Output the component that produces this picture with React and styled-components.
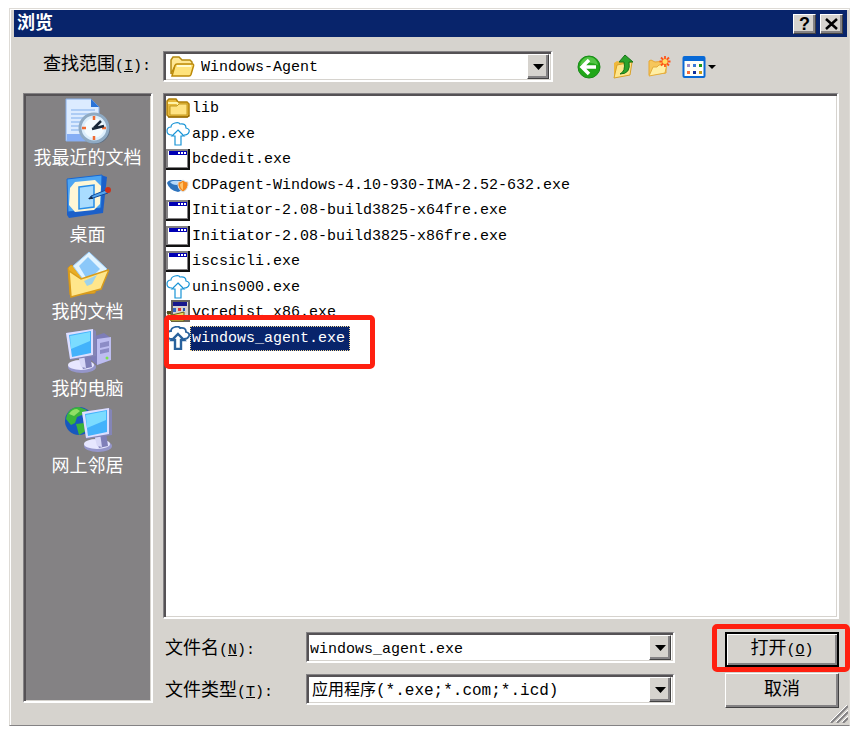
import React, { useState } from 'react';
import styled, { createGlobalStyle, css } from 'styled-components';

const GlobalStyle = createGlobalStyle`
  * {
    box-sizing: border-box;
  }
  body {
    margin: 0;
    background: #fff;
    color: #000;
    font-family: "Liberation Mono", "Noto Sans CJK SC", monospace;
    font-size: 15px;
    line-height: 20px;
  }
  button, input, select {
    font: inherit;
    color: inherit;
    margin: 0;
    padding: 0;
    border: 0;
    border-radius: 0;
    background: none;
  }
  svg {
    display: block;
    flex: none;
  }
`;

const sunken = css`
  border: solid;
  border-width: 1px 2px 2px 1px;
  border-color: #848284 #fff #fff #848284;
  box-shadow: inset 2px 2px #555255, inset -1px -1px #d6d3ce;
`;

const raised = css`
  background: #d6d3ce;
  border: 1px solid;
  border-color: #fff #424142 #424142 #fff;
  box-shadow: inset -2px -2px #848284;
`;

const Page = styled.div`
  min-height: 100vh;
  padding: 8px 4px 10px 9px;
  display: flex;
`;

const Dialog = styled.main`
  position: relative;
  flex: 1;
  min-width: 0;
  display: flex;
  flex-direction: column;
  padding-top: 1px;
  background: #d6d3ce;
  border: 1px solid #dedbd6;
  border-bottom-color: #848284;
  box-shadow: inset 1px 1px #fff;
`;

const TitleBar = styled.header`
  height: 27px;
  margin: 0 2px 0 4px;
  padding: 0 4px 0 3px;
  display: flex;
  align-items: center;
  gap: 4px;
  background: #08246b;
  color: #fff;
  h1 {
    flex: 1;
    margin: 0;
    font-size: 18px;
    line-height: 20px;
    font-weight: bold;
  }
`;

const CaptionButton = styled.button`
  ${raised}
  width: 23px;
  height: 20px;
  display: flex;
  align-items: center;
  justify-content: center;
  color: #000;
  font-family: "Liberation Sans", sans-serif;
  font-size: 18px;
  font-weight: bold;
`;

const Body = styled.div`
  flex: 1;
  display: grid;
  grid-template-columns: 130px minmax(0, 1fr);
  grid-template-rows: 31px 1fr;
  gap: 11px 10px;
  padding: 14px 10px 17px 13px;
`;

const Label = styled.label`
  white-space: nowrap;
  text-align: ${p => p.$right ? 'right' : 'left'};
  padding: 4px 2px 0;
`;

const Zh = styled.span`
  font-size: 18px;
`;

const LookIn = styled.div`
  display: flex;
  align-items: center;
`;

const Field = styled.div`
  ${sunken}
  flex: 1;
  min-width: 0;
  height: 31px;
  padding: 2px 2px 1px 2px;
  background: #fff;
  display: grid;
  grid-template-columns: minmax(0, 1fr) 22px;
  align-items: center;
  > svg {
    grid-area: 1 / 1;
    margin-left: 4px;
    pointer-events: none;
  }
`;

const Select = styled.select`
  grid-area: 1 / 1 / 2 / 3;
  appearance: none;
  width: 100%;
  height: 25px;
  padding-top: 3px;
  padding-left: ${p => p.$withIcon ? '35px' : '3px'};
  font-size: ${p => p.$withIcon ? '15px' : '16px'};
  outline: none;
`;

const TextInput = styled.input`
  width: 100%;
  height: 25px;
  padding-top: 4px;
  padding-left: 1px;
  outline: none;
`;

const arrowBox = css`
  ${raised}
  grid-area: 1 / 2;
  width: 22px;
  height: 25px;
  display: flex;
  align-items: center;
  justify-content: center;
`;

const SelectArrow = styled.span`
  ${arrowBox}
  pointer-events: none;
`;

const DropButton = styled.button`
  ${arrowBox}
`;

const Tools = styled.div`
  flex: none;
  width: 286px;
  padding-left: 24px;
  display: flex;
  align-items: center;
  gap: 11px;
  button {
    height: 26px;
    display: flex;
    align-items: center;
  }
`;

const Places = styled.nav`
  ${sunken}
  margin-bottom: 5px;
  padding-top: 3px;
  background: #848284;
  display: flex;
  flex-direction: column;
  gap: 3px;
`;

const Place = styled.button`
  height: 74px;
  display: flex;
  flex-direction: column;
  align-items: center;
  gap: 4px;
  color: #fff;
  font-size: 18px;
  white-space: nowrap;
`;

const Content = styled.div`
  display: flex;
  flex-direction: column;
  gap: 13px;
`;

const FileList = styled.ul`
  ${sunken}
  flex: 1;
  margin: 0;
  padding: 1px 2px;
  list-style: none;
  background: #fff;
  display: grid;
  grid-template-rows: repeat(5, 26px 25px);
  li {
    position: relative;
    justify-self: start;
  }
`;

const FileItem = styled.button`
  height: 26px;
  display: flex;
  align-items: center;
  white-space: nowrap;
`;

const FileName = styled.span`
  height: 25px;
  line-height: 24px;
  padding: 0 4px 0 1px;
  border: 1px dotted ${p => p.$selected ? '#f7db94' : 'transparent'};
  background: ${p => p.$selected ? '#08246b' : 'transparent'};
  color: ${p => p.$selected ? '#fff' : '#000'};
`;

const Marker = styled.span`
  position: absolute;
  border: 5px solid #ff2010;
  border-radius: 5px;
  pointer-events: none;
`;

const FileMarker = styled(Marker)`
  inset: -10px -25px -19px -2px;
`;

const ButtonMarker = styled(Marker)`
  inset: -8px -11px -5px -13px;
`;

const Footer = styled.form`
  display: flex;
  gap: 50px;
`;

const Fields = styled.div`
  flex: 1;
  min-width: 0;
  display: grid;
  grid-template-columns: 143px minmax(0, 1fr);
  grid-auto-rows: 31px;
  gap: 11px 0;
  align-items: center;
`;

const Actions = styled.div`
  width: 114px;
  display: flex;
  flex-direction: column;
  gap: 6px;
`;

const ActionSlot = styled.div`
  position: relative;
`;

const ActionButton = styled.button`
  ${raised}
  width: 100%;
  height: 35px;
  ${p => p.$default && css`
    border: 2px solid #000;
    box-shadow: inset 1px 1px #fff, inset -2px -2px #848284;
  `}
`;

const Grip = styled.svg`
  position: absolute;
  right: 1px;
  bottom: 2px;
`;

const ArrowIcon = () => (
  <svg width="11" height="6" viewBox="0 0 11 6"><path d="M0 0h11L5.500 6z" fill="#000" /></svg>
);

const OpenFolder = () => (
  <svg width="25" height="22" viewBox="0 0 25 22">
    <path d="M1 18V4l2-3h6l3 3h8l2 2v4H5z" fill="#ffe794" stroke="#b58a10" strokeWidth="1.500" />
    <path d="M2 20L5 9.500Q5.500 8 7 8h15.500Q24 8 23.500 10L21 18.500Q20.500 20 19 20z" fill="#ffe37b" stroke="#bd8a08" strokeWidth="1.500" />
    <path d="M7 10h14" stroke="#fffbd0" strokeWidth="2" />
  </svg>
);

const ClosedFolder = () => (
  <svg width="24" height="22" viewBox="0 0 24 22">
    <path d="M1 18V4l2-2h7l2 3h9l2 2v12l-2 1H3z" fill="#e8b93c" stroke="#b08008" strokeWidth="1.500" />
    <path d="M2 6h9l2 3h8" fill="none" stroke="#fff3a8" strokeWidth="2" />
    <path d="M4 9h7l2-2h8v11H4z" fill="#ffe382" stroke="#c29a20" />
    <path d="M2 20h20l1-2" fill="none" stroke="#8c6508" />
  </svg>
);

const CloudIcon = ({ dark }) => (
  <svg width="24" height="24" viewBox="0 0 24 24" fill="#fff" stroke={dark ? '#28619c' : '#1894d6'} strokeWidth={dark ? 1.8 : 1.2}>
    <path d="M6 13Q1 13 1 9t4-4Q5 2 9 1t5 1q6-1 6 4 4 1 3 4t-5 3" />
    <path d="M12 8l6 6h-3v9H9v-9H6z" strokeWidth={dark ? 2.4 : 1.2} />
  </svg>
);

const AppWindow = () => (
  <svg width="24" height="21" viewBox="0 0 24 21">
    <path d="M0 0h24v21H0z" fill="#111" />
    <path d="M0 0h22v19H0z" fill="#848284" />
    <path d="M2 2h19v16H2z" fill="#fff" />
    <path d="M3 2h18v4H3z" fill="#0000b5" />
    <path d="M12 3h2v2h-2zm3 0h2v2h-2zm3 0h2v2h-2z" fill="#fff" />
  </svg>
);

const ShieldIcon = () => (
  <svg width="24" height="20" viewBox="0 0 24 20">
    <path d="M1 8q1-3 6-3h9l4 3-3 7-5 2q-9-2-11-9z" fill="#2d73bd" />
    <path d="M4 7q4-2 10-1l-3 4q-5 0-7-3z" fill="#b6dafa" />
    <path d="M12 7q3 0 5-2 2 2 5 2 1 7-5 10-6-3-5-10z" fill="#f58a1e" stroke="#dce6f0" />
    <path d="M17 7v8q-3-2-3-6z" fill="#ffc36b" />
  </svg>
);

const SetupIcon = () => (
  <svg width="24" height="24" viewBox="0 0 24 24">
    <path d="M6 1h17v20H6z" fill="#d6d3ce" stroke="#66635e" strokeWidth="2" />
    <path d="M7 2h14v4H7z" fill="#18188c" />
    <path d="M7 8h3v4H7z" fill="#3869c6" /><path d="M12 8h3v3h-3z" fill="#d83838" /><path d="M17 8h2v3h-2z" fill="#2850b0" />
    <path d="M1 12l5 3 12-3v9H5z" fill="#efdf62" stroke="#6b6118" />
    <path d="M1 11h4v3H1z" fill="#555020" />
  </svg>
);

const BackIcon = () => (
  <svg width="24" height="24" viewBox="0 0 24 24">
    <circle cx="12" cy="12" r="11" fill="#21a618" stroke="#188a18" />
    <path d="M3 10Q5 2 12 2t9 8q-8-4-18 0z" fill="#6bd35a" opacity=".7" />
    <path d="M12 5l-7 7 7 7M6 12h13" fill="none" stroke="#fff" strokeWidth="3.500" />
  </svg>
);

const UpIcon = () => (
  <svg width="24" height="26" viewBox="0 0 24 26">
    <path d="M2 23V9l3-2 3 1 10-3v15z" fill="#efb83a" />
    <path d="M2 24l3-13 15-3-2 13z" fill="#ffe68c" stroke="#d8a027" />
    <path d="M8 20q6-3 4-12H7l6-7 8 7h-4q2 12-9 12z" fill="#2ba32b" stroke="#167316" />
  </svg>
);

const NewFolderIcon = () => (
  <svg width="24" height="24" viewBox="0 0 24 24">
    <path d="M2 20V6l2-1 4 2 11-1v12z" fill="#f6c65b" stroke="#e7a633" />
    <path d="M2 21l4-9h4l2-2 8-1-2 9z" fill="#ffefa5" stroke="#e5ad3a" />
    <path d="M18 1v11M12.500 6.500h11M14 2.500l8 8m0-8l-8 8" stroke="#ff5518" strokeWidth="1.800" />
    <circle cx="18" cy="6.500" r="2.500" fill="#ffdf63" />
  </svg>
);

const ViewsIcon = () => (
  <svg width="34" height="24" viewBox="0 0 34 24">
    <rect x="1.500" y="2" width="21" height="20" rx="1" fill="#fffff7" stroke="#0869d6" strokeWidth="2" />
    <path d="M1 2h22v4H1z" fill="#0869d6" />
    <path d="M5 9h3v3H5z" fill="#9c8ac6" /><path d="M11 9h3v3h-3z" fill="#3979d6" /><path d="M17 9h3v3h-3z" fill="#18961c" />
    <path d="M5 16h3v3H5z" fill="#f76b39" /><path d="M11 16h3v3h-3z" fill="#10309c" /><path d="M17 16h3v3h-3z" fill="#c69a18" />
    <path d="M26 10h8l-4 4z" fill="#000" />
  </svg>
);

const RecentIcon = () => (
  <svg width="48" height="48" viewBox="0 0 48 48">
    <path d="M2 2h25l8 8v34H2z" fill="#dcebff" stroke="#86aee9" />
    <path d="M3 37h20v7H3z" fill="#86aef5" />
    <path d="M27 2v8h8z" fill="#2b73d6" />
    <path d="M7 13h24M7 17h20M7 21h12M7 25h10M7 29h9M7 33h9" stroke="#9dc2f2" strokeWidth="1.500" />
    <circle cx="31" cy="32" r="15" fill="#5b6c80" />
    <circle cx="30" cy="31" r="14" fill="#dceefc" stroke="#8faac3" strokeWidth="3" />
    <circle cx="30" cy="31" r="10" fill="#f3fbff" />
    <path d="M30 19v4m0 16v4M18 31h4m16 0h4" stroke="#ef6c34" strokeWidth="2.500" />
    <path d="M30 31l7-7m-9 8l12-3" stroke="#162739" strokeWidth="2.500" />
  </svg>
);

const DesktopIcon = () => (
  <svg width="48" height="48" viewBox="0 0 48 48">
    <path d="M3 6l34-5 6 2-4 36-34 5-2-3z" fill="#1c60c9" />
    <path d="M3 5l35-4-1 33-33 4z" fill="#4da5f2" stroke="#1b68cf" />
    <path d="M11 8l20-2 6 6-1 18-6 6-19 2-6-7 1-17z" fill="#fff7d6" />
    <path d="M15 13l15-2v22l-15 2z" fill="#a9dcff" stroke="#278de8" strokeWidth="1.500" />
    <path d="M27 22l15-6 2 3-15 5-4 1z" fill="#52a6ef" stroke="#154b9c" />
    <circle cx="44" cy="16" r="3" fill="#cc3018" />
    <path d="M24 25l4-3 1 3z" fill="#172c48" />
  </svg>
);

const DocumentsIcon = () => (
  <svg width="48" height="48" viewBox="0 0 48 48">
    <path d="M4 17l3-3 4 2 4-2 20 4-4 24-25 2z" fill="#e8ad26" stroke="#d5941a" />
    <path d="M9 15L25 1l18 17-18 18z" fill="#e2f4ff" stroke="#9bd1ff" />
    <path d="M15 15l9-9 12 12-12 12z" fill="#8bc8f9" />
    <path d="M7 46L5 20l12 8 6-2 21-7q1 0 0 2l-7 17z" fill="#ffe68b" stroke="#d99c1b" strokeWidth="1.500" />
    <path d="M20 30l13-6-5 9-5 2z" fill="#9ed3ec" />
  </svg>
);

const Screen = () => (
  <>
    <ellipse cx="18" cy="39" rx="14" ry="6" fill="#9596cb" />
    <ellipse cx="17" cy="37" rx="13" ry="5" fill="#e7e7ff" />
    <path d="M14 27l12-2 2 14-9 2z" fill="#7f7fb8" /><path d="M14 27l6-1 2 14-5-1z" fill="#d8d8f7" />
    <path d="M2 5l27-4 3 2v25L6 32z" fill="#8485b7" />
    <path d="M2 5l27-4v26L6 31z" fill="#dddfff" />
    <path d="M5 7l22-4v22L8 29z" fill="#43b2fb" />
    <path d="M6 8l20-4v9L7 21z" fill="#7bdcff" />
  </>
);

const ComputerIcon = () => (
  <svg width="48" height="48" viewBox="0 0 48 48">
    <path d="M28 9l12-4 7 5v22l-14 5-6-5z" fill="#7d7db8" />
    <path d="M33 11l14-2v23l-14 5z" fill="#bdbdf0" />
    <path d="M36 15l9-2v5l-9 2zm0 7l9-2v4l-9 2z" fill="#8c8cc6" />
    <circle cx="43" cy="30" r="1.500" fill="#77e64a" />
    <Screen />
  </svg>
);

const NetworkIcon = () => (
  <svg width="48" height="48" viewBox="0 0 48 48">
    <circle cx="15" cy="16" r="14" fill="#1758bf" />
    <path d="M2 14Q4 2 15 2l8 3-5 5-5 2-2 6-4 2zM12 19l8-1 2 8-7 4z" fill="#3bb53a" />
    <path d="M5 9q3-5 8-5l3 2-6 5z" fill="#91df66" />
    <g transform="translate(16 2)"><Screen /></g>
  </svg>
);

const fileIcons = { folder: ClosedFolder, cloud: CloudIcon, app: AppWindow, shield: ShieldIcon, setup: SetupIcon };

const files = [
  { name: 'lib', icon: 'folder' },
  { name: 'app.exe', icon: 'cloud' },
  { name: 'bcdedit.exe', icon: 'app' },
  { name: 'CDPagent-Windows-4.10-930-IMA-2.52-632.exe', icon: 'shield' },
  { name: 'Initiator-2.08-build3825-x64fre.exe', icon: 'app' },
  { name: 'Initiator-2.08-build3825-x86fre.exe', icon: 'app' },
  { name: 'iscsicli.exe', icon: 'app' },
  { name: 'unins000.exe', icon: 'cloud' },
  { name: 'vcredist_x86.exe', icon: 'setup' },
  { name: 'windows_agent.exe', icon: 'cloud', marked: true },
];

const places = [
  { name: '我最近的文档', Icon: RecentIcon },
  { name: '桌面', Icon: DesktopIcon },
  { name: '我的文档', Icon: DocumentsIcon },
  { name: '我的电脑', Icon: ComputerIcon },
  { name: '网上邻居', Icon: NetworkIcon },
];

function App() {
  const [selected, setSelected] = useState('windows_agent.exe');

  return (
    <>
      <GlobalStyle />
      <Page>
        <Dialog>
          <TitleBar>
            <h1>浏览</h1>
            <CaptionButton type="button">?</CaptionButton>
            <CaptionButton type="button" aria-label="关闭">
              <svg width="13" height="12" viewBox="0 0 13 12">
                <path d="M1 1l11 10M12 1L1 11" stroke="#000" strokeWidth="2.500" />
              </svg>
            </CaptionButton>
          </TitleBar>

          <Body>
            <Label htmlFor="folder" $right><Zh>查找范围</Zh>(<u>I</u>):</Label>
            <LookIn>
              <Field>
                <Select id="folder" $withIcon>
                  <option>Windows-Agent</option>
                </Select>
                <OpenFolder />
                <SelectArrow><ArrowIcon /></SelectArrow>
              </Field>
              <Tools>
                <button type="button" aria-label="后退"><BackIcon /></button>
                <button type="button" aria-label="向上一级"><UpIcon /></button>
                <button type="button" aria-label="新建文件夹"><NewFolderIcon /></button>
                <button type="button" aria-label="查看"><ViewsIcon /></button>
              </Tools>
            </LookIn>

            <Places>
              {places.map(({ name, Icon }) => (
                <Place key={name} type="button">
                  <Icon />
                  <span>{name}</span>
                </Place>
              ))}
            </Places>

            <Content>
              <FileList>
                {files.map(file => {
                  const Icon = fileIcons[file.icon];
                  const active = file.name === selected;
                  return (
                    <li key={file.name}>
                      <FileItem type="button" onClick={() => setSelected(file.name)}>
                        <Icon dark={active} />
                        <FileName $selected={active}>{file.name}</FileName>
                      </FileItem>
                      {file.marked && <FileMarker />}
                    </li>
                  );
                })}
              </FileList>

              <Footer onSubmit={e => e.preventDefault()}>
                <Fields>
                  <Label htmlFor="filename"><Zh>文件名</Zh>(<u>N</u>):</Label>
                  <Field>
                    <TextInput id="filename" value={selected} onChange={e => setSelected(e.target.value)} />
                    <DropButton type="button" aria-label="最近的文件名"><ArrowIcon /></DropButton>
                  </Field>
                  <Label htmlFor="filetype"><Zh>文件类型</Zh>(<u>T</u>):</Label>
                  <Field>
                    <Select id="filetype">
                      <option>应用程序(*.exe;*.com;*.icd)</option>
                    </Select>
                    <SelectArrow><ArrowIcon /></SelectArrow>
                  </Field>
                </Fields>
                <Actions>
                  <ActionSlot>
                    <ActionButton type="submit" $default><Zh>打开</Zh>(<u>O</u>)</ActionButton>
                    <ButtonMarker />
                  </ActionSlot>
                  <ActionButton type="button"><Zh>取消</Zh></ActionButton>
                </Actions>
              </Footer>
            </Content>
          </Body>

          <Grip width="18" height="18" viewBox="0 0 18 18">
            <path d="M1 18L18 1M7 18L18 7M13 18l5-5" stroke="#848284" strokeWidth="2" />
            <path d="M0 17L17 0M6 17L18 5M12 17l6-6" stroke="#fff" />
          </Grip>
        </Dialog>
      </Page>
    </>
  );
}

export default App;
